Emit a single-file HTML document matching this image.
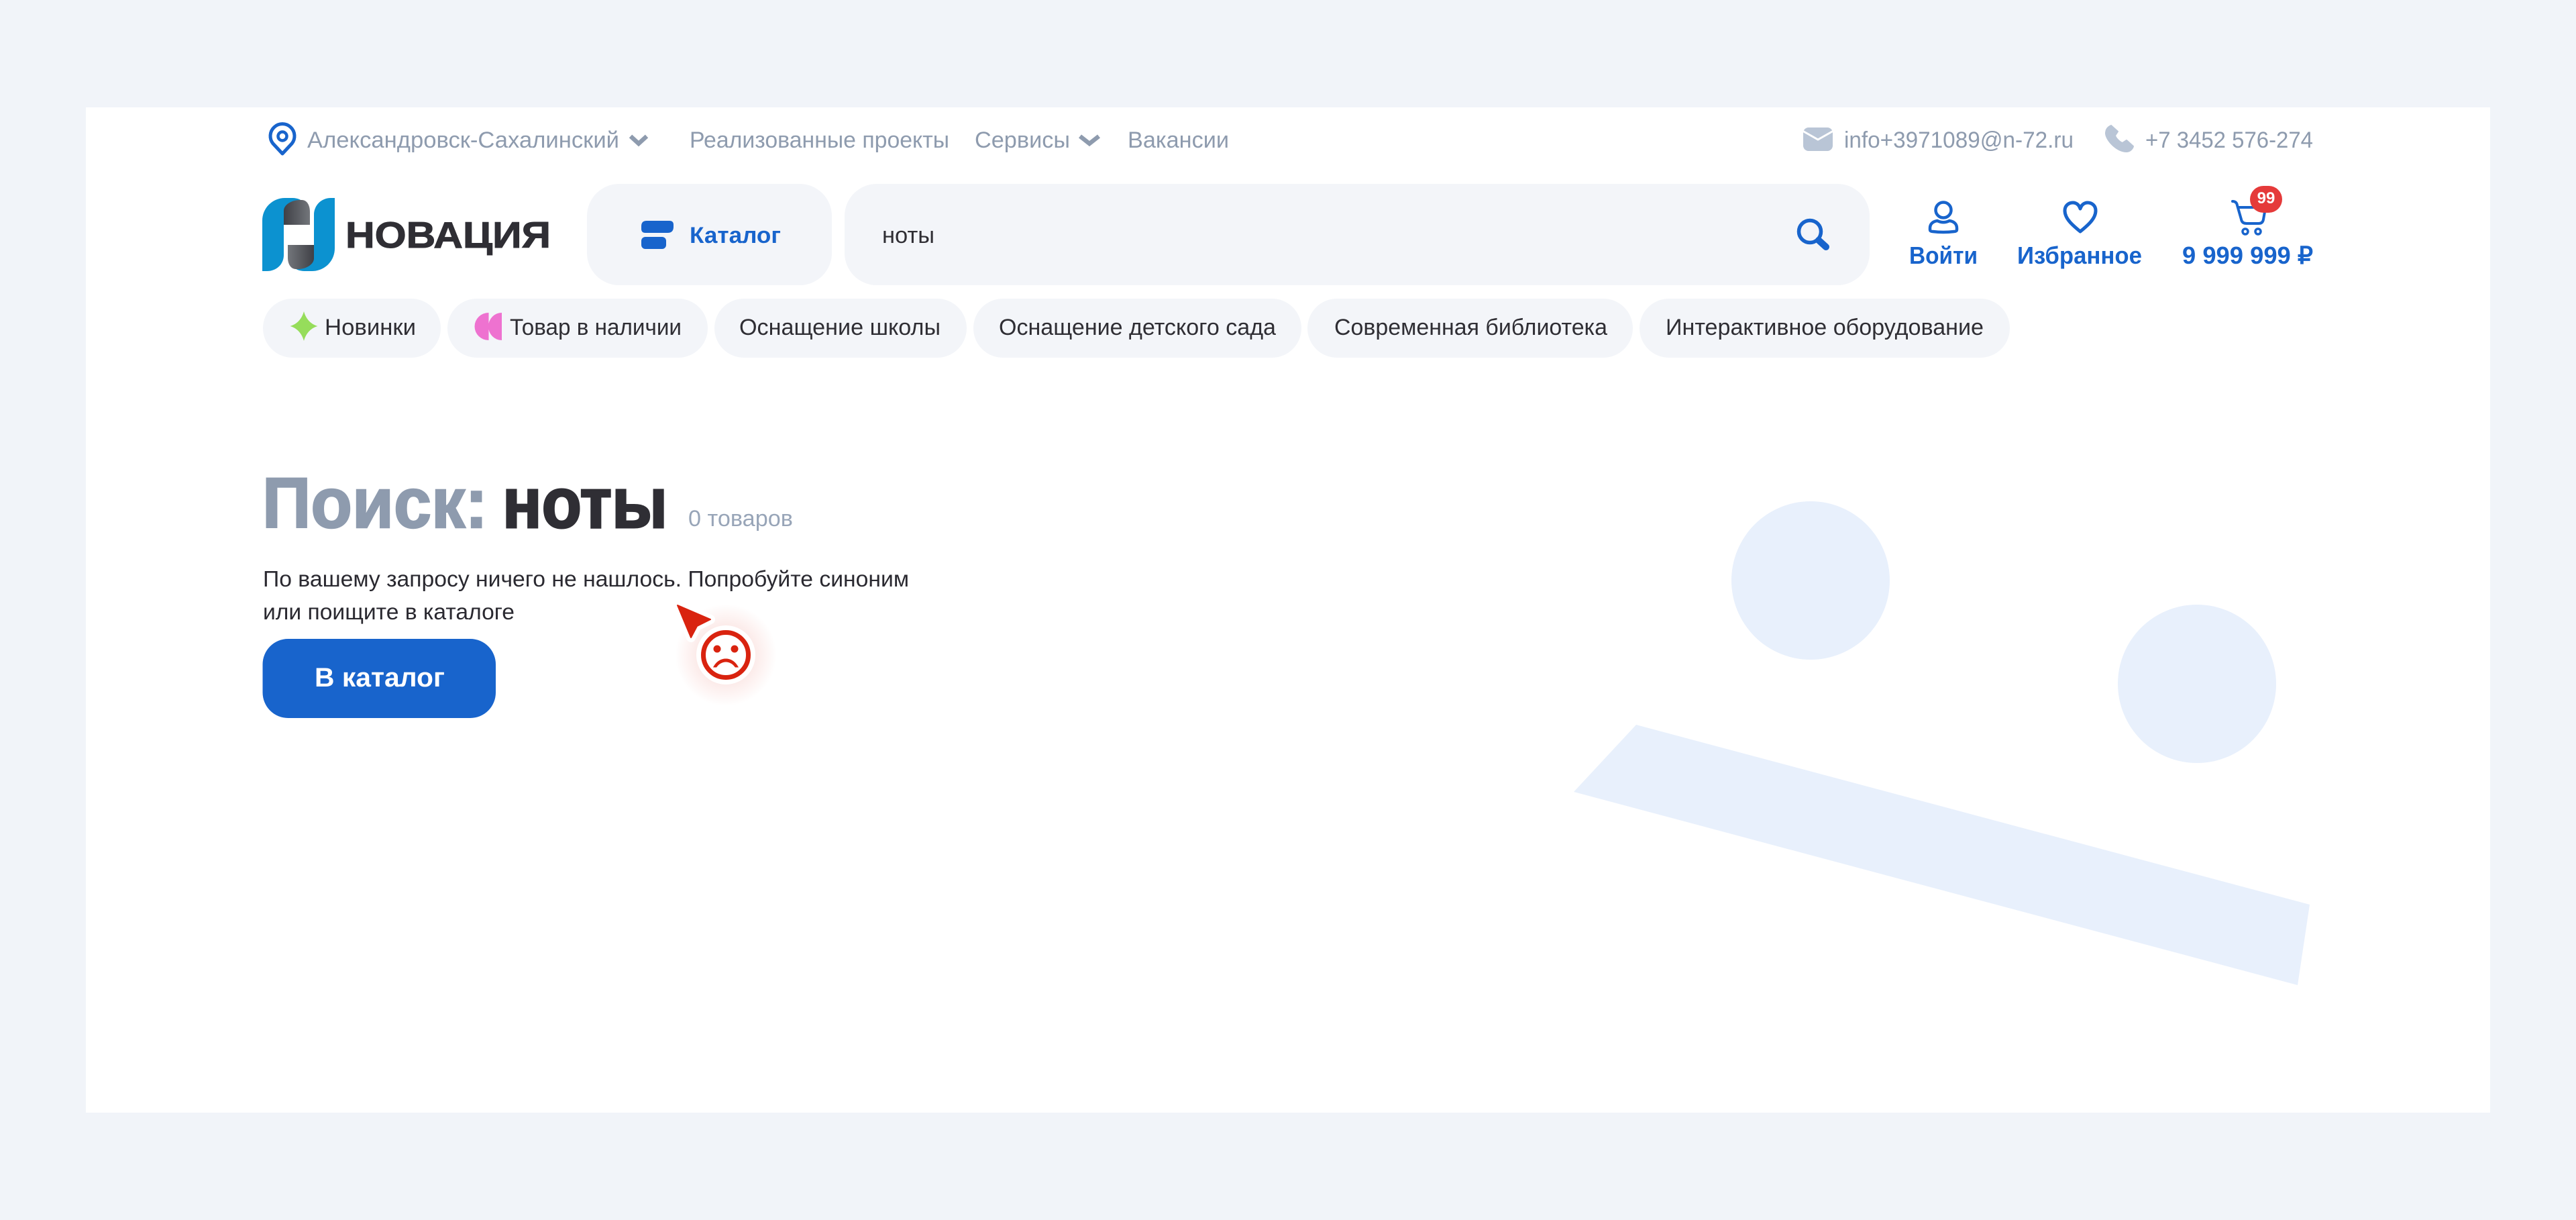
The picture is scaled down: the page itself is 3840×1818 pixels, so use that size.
<!DOCTYPE html>
<html lang="ru">
<head>
<meta charset="utf-8">
<title>Поиск: ноты</title>
<style>
html,body{margin:0;padding:0;width:3840px;height:1818px;overflow:hidden;background:#F1F4F9}
svg{display:block}
text{font-family:"Liberation Sans",sans-serif;white-space:pre}
.g{font-size:34px;fill:#8E9BAE}
.d{font-size:34px;fill:#2F2E34}
.b{font-size:36px;font-weight:700;fill:#1864CC}
</style>
</head>
<body>
<svg xmlns="http://www.w3.org/2000/svg" width="3840" height="1818" viewBox="0 0 3840 1818">
<defs>
<linearGradient id="d1" x1="0" x2="1" y1="0" y2="0"><stop offset="0" stop-color="#3F4046"/><stop offset="1" stop-color="#73767B"/></linearGradient>
<linearGradient id="d2" x1="0" x2="1" y1="0" y2="0"><stop offset="0" stop-color="#73767B"/><stop offset="1" stop-color="#3F4046"/></linearGradient>
<radialGradient id="glow"><stop offset="0" stop-color="#E0301E" stop-opacity=".18"/><stop offset=".6" stop-color="#E0301E" stop-opacity=".09"/><stop offset="1" stop-color="#E0301E" stop-opacity="0"/></radialGradient>
</defs>
<rect width="3840" height="1818" fill="#F1F4F9"/>
<rect x="128" y="160" width="3584" height="1498" fill="#fff"/>

<!-- decorative shapes -->
<circle cx="2699" cy="865" r="118" fill="#E8F0FC"/>
<circle cx="3275" cy="1019" r="118" fill="#E8F0FC"/>
<polygon points="2439,1080 2346,1180 3425,1468 3443,1348" fill="#E8F0FC"/>

<!-- top bar -->
<path d="M421 229 L407 214 A18 18 0 1 1 435 214 Z" fill="none" stroke="#1864CC" stroke-width="5" stroke-linejoin="round"/>
<circle cx="421" cy="203" r="6.500" fill="none" stroke="#1864CC" stroke-width="4.500"/>
<text class="g" x="458" y="220" textLength="465" lengthAdjust="spacingAndGlyphs">Александровск-Сахалинский</text>
<path d="M940 203 L952 214 L964 203" fill="none" stroke="#8E9BAE" stroke-width="6.500"/>
<text class="g" x="1028" y="220" textLength="387" lengthAdjust="spacingAndGlyphs">Реализованные проекты</text>
<text class="g" x="1453" y="220" textLength="142" lengthAdjust="spacingAndGlyphs">Сервисы</text>
<path d="M1610 203 L1624 214 L1638 203" fill="none" stroke="#8E9BAE" stroke-width="6.500"/>
<text class="g" x="1681" y="220" textLength="151" lengthAdjust="spacingAndGlyphs">Вакансии</text>

<rect x="2688" y="190" width="44" height="35" rx="8" fill="#B9C5D6"/>
<path d="M2687 195 L2710 208 L2733 195" fill="none" stroke="#fff" stroke-width="3"/>
<text class="g" x="2749" y="220" textLength="342" lengthAdjust="spacingAndGlyphs">info+3971089@n-72.ru</text>
<path d="M3147 187 C3142 189 3139 193 3139 199 C3140 210 3156 226 3170 226 C3175 226 3179 222 3180 218 L3170 209 L3164 213 C3160 212 3154 206 3153 202 L3157 196 Z" fill="#B9C5D6" stroke="#B9C5D6" stroke-width="2" stroke-linejoin="round"/>
<text class="g" x="3198" y="220" textLength="250" lengthAdjust="spacingAndGlyphs">+7 3452 576-274</text>

<!-- logo -->
<path d="M391 404 V329 C391 310 406 295 425 295 H436 C452 295 462 308 462 322 V335 H423 V380 C423 394 412 404 398 404 Z" fill="#0C92D0"/>
<path d="M423 335 V314 C423 305 435 298 447 298 H450 C457 298 462 305 462 316 V335 Z" fill="url(#d1)"/>
<path d="M499 295 V370 C499 389 484 404 465 404 H454 C438 404 429 392 429 378 V365 H468 V320 C468 306 479 295 493 295 Z" fill="#0C92D0"/>
<path d="M429 365 H468 V385 C468 394 456 401 445 401 H441 C434 401 429 394 429 384 Z" fill="url(#d2)"/>
<text x="515" y="369" font-size="55" font-weight="700" fill="#2F2E34" stroke="#2F2E34" stroke-width="1" textLength="306" lengthAdjust="spacingAndGlyphs">НОВАЦИЯ</text>

<!-- catalog -->
<rect x="875" y="274" width="365" height="151" rx="48" fill="#F3F5F9"/>
<path d="M964 329 H998 Q1004 329 1004 335 V338 Q1004 347 995 347 H962 Q956 347 956 341 V337 Q956 329 964 329 Z" fill="#1864CC"/>
<rect x="956" y="353" width="37" height="18" rx="6" fill="#1864CC"/>
<text x="1028" y="362" font-size="34" font-weight="700" fill="#1864CC" textLength="136" lengthAdjust="spacingAndGlyphs">Каталог</text>

<!-- search -->
<rect x="1259" y="274" width="1528" height="151" rx="48" fill="#F3F5F9"/>
<text class="d" x="1315" y="362" textLength="78" lengthAdjust="spacingAndGlyphs">ноты</text>
<circle cx="2698" cy="345" r="16.500" fill="none" stroke="#1864CC" stroke-width="5.500"/>
<path d="M2711 358 L2722 368" stroke="#1864CC" stroke-width="10" stroke-linecap="round"/>

<!-- user actions -->
<ellipse cx="2897" cy="313" rx="11.500" ry="11.500" fill="none" stroke="#1864CC" stroke-width="4.500"/>
<path d="M2888 329 C2881 330 2877 334 2877 340 V342 Q2877 345 2881 345 Q2897 347 2913 345 Q2917 345 2917 342 V340 C2917 334 2913 330 2906 329 C2900 332 2894 332 2888 329 Z" fill="none" stroke="#1864CC" stroke-width="4.500" stroke-linejoin="round"/>
<text class="b" x="2846" y="393" textLength="102" lengthAdjust="spacingAndGlyphs">Войти</text>

<path d="M3101 345 C3090 336 3078 326 3078 314 C3078 306 3084 302 3090 302 C3095 302 3099 305 3101 311 C3103 305 3107 302 3112 302 C3118 302 3124 306 3124 314 C3124 326 3112 336 3101 345 Z" fill="none" stroke="#1864CC" stroke-width="5" stroke-linejoin="round"/>
<text class="b" x="3007" y="393" textLength="186" lengthAdjust="spacingAndGlyphs">Избранное</text>

<path d="M3328 300 Q3334 300 3335 306 L3341 327 Q3342 333 3349 333 H3367 Q3373 333 3374 327 L3377 310 M3336 309 H3376" fill="none" stroke="#1864CC" stroke-width="4" stroke-linecap="round"/>
<circle cx="3347" cy="345" r="4" fill="none" stroke="#1864CC" stroke-width="3.500"/>
<circle cx="3366" cy="345" r="4" fill="none" stroke="#1864CC" stroke-width="3.500"/>
<rect x="3354" y="277" width="48" height="40" rx="20" fill="#E53A3A"/>
<text x="3378" y="303" font-size="24" font-weight="700" fill="#fff" text-anchor="middle">99</text>
<text class="b" x="3253" y="393" textLength="195" lengthAdjust="spacingAndGlyphs">9 999 999 ₽</text>

<!-- chips -->
<rect x="392" y="445" width="265" height="88" rx="44" fill="#F3F5F9"/>
<rect x="667" y="445" width="388" height="88" rx="44" fill="#F3F5F9"/>
<rect x="1065" y="445" width="376" height="88" rx="44" fill="#F3F5F9"/>
<rect x="1451" y="445" width="489" height="88" rx="44" fill="#F3F5F9"/>
<rect x="1949" y="445" width="485" height="88" rx="44" fill="#F3F5F9"/>
<rect x="2444" y="445" width="552" height="88" rx="44" fill="#F3F5F9"/>
<path d="M453 464 C456 475 463 483 473.500 486 C463 489 456 497 453 508 C450 497 443 489 432.500 486 C443 483 450 475 453 464 Z" fill="#96DD5B"/>
<path d="M728.500 466 A21 20.500 0 0 0 728.500 507 Z" fill="#EE72D0"/>
<path d="M748 466 A20 20.500 0 0 0 748 507 Z" fill="#EE72D0"/>
<text class="d" x="484" y="499" textLength="136" lengthAdjust="spacingAndGlyphs">Новинки</text>
<text class="d" x="760" y="499" textLength="256" lengthAdjust="spacingAndGlyphs">Товар в наличии</text>
<text class="d" x="1102" y="499" textLength="300" lengthAdjust="spacingAndGlyphs">Оснащение школы</text>
<text class="d" x="1489" y="499" textLength="413" lengthAdjust="spacingAndGlyphs">Оснащение детского сада</text>
<text class="d" x="1989" y="499" textLength="407" lengthAdjust="spacingAndGlyphs">Современная библиотека</text>
<text class="d" x="2483" y="499" textLength="474" lengthAdjust="spacingAndGlyphs">Интерактивное оборудование</text>

<!-- heading -->
<text x="391" y="786" font-size="106" font-weight="700" fill="#8E9BAE" stroke="#8E9BAE" stroke-width="2.500" textLength="336" lengthAdjust="spacingAndGlyphs">Поиск:</text>
<text x="749" y="786" font-size="106" font-weight="700" fill="#2F2E34" stroke="#2F2E34" stroke-width="3" textLength="246" lengthAdjust="spacingAndGlyphs">ноты</text>
<text x="1026" y="784" font-size="34" fill="#98A5B8" textLength="156" lengthAdjust="spacingAndGlyphs">0 товаров</text>

<text class="d" x="392" y="874" style="font-size:33px;fill:#2A2930" textLength="963" lengthAdjust="spacingAndGlyphs">По вашему запросу ничего не нашлось. Попробуйте синоним</text>
<text class="d" x="392" y="923" style="font-size:33px;fill:#2A2930" textLength="375" lengthAdjust="spacingAndGlyphs">или поищите в каталоге</text>

<!-- button -->
<rect x="391.500" y="952" width="347.500" height="118" rx="38" fill="#1864CC"/>
<text x="469" y="1023" font-size="40" font-weight="700" fill="#fff" textLength="194" lengthAdjust="spacingAndGlyphs">В каталог</text>

<!-- sad icon -->
<circle cx="1082" cy="976" r="76" fill="url(#glow)"/>
<path d="M1010 902 L1059 923 L1039 933 L1030 950 Z" fill="#D9230F" stroke="#fff" stroke-width="14" stroke-linejoin="round"/>
<path d="M1010 902 L1059 923 L1039 933 L1030 950 Z" fill="#D9230F" stroke="#D9230F" stroke-width="2" stroke-linejoin="round"/>
<circle cx="1082" cy="976" r="44" fill="#fff"/>
<circle cx="1082" cy="976" r="33.500" fill="none" stroke="#D9230F" stroke-width="7"/>
<circle cx="1069" cy="967" r="5.500" fill="#D9230F"/>
<circle cx="1095" cy="967" r="5.500" fill="#D9230F"/>
<path d="M1063 994.500 C1068 985 1075 981.500 1082 981.500 C1089 981.500 1096 985 1101 994.500 H1096 C1092 989 1087 986.500 1082 986.500 C1077 986.500 1072 989 1068 994.500 Z" fill="#D9230F"/>
</svg>
</body>
</html>
